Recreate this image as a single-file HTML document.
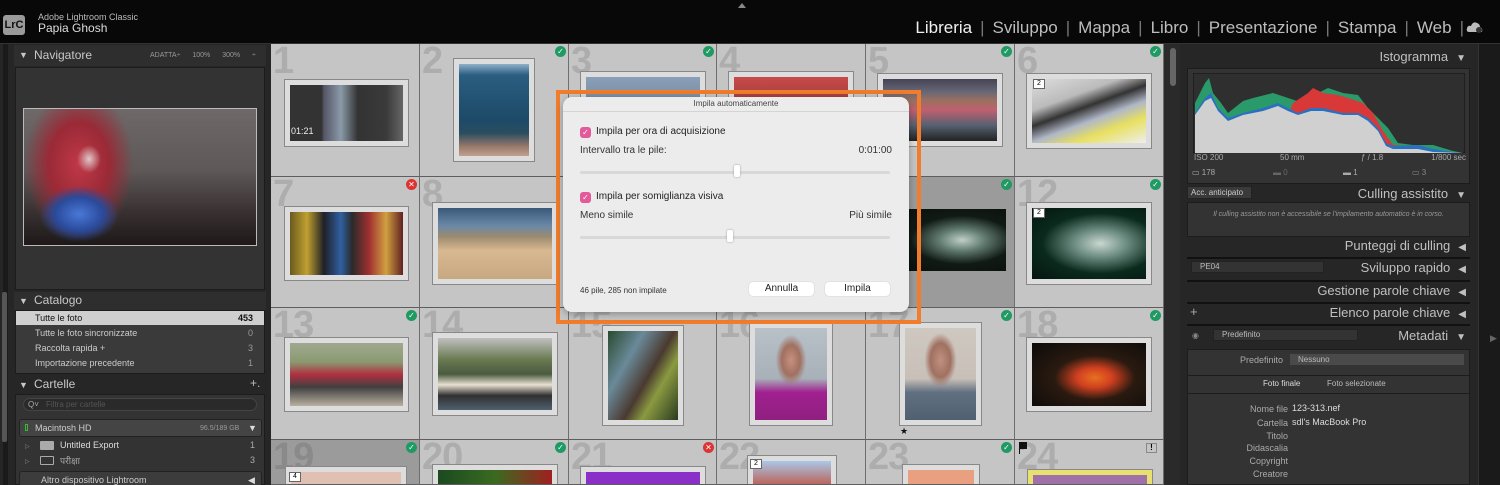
<!DOCTYPE html>
<html><head><meta charset="utf-8"><style>
*{margin:0;padding:0;box-sizing:border-box}
html,body{width:1500px;height:485px;overflow:hidden}
body{background:#1e1e1e;font-family:"Liberation Sans","DejaVu Sans",sans-serif;position:relative}
.a{position:absolute}
.top{left:0;top:0;width:1500px;height:44px;background:#080808;border-bottom:1px solid #333}
.nav{right:28px;top:18px;font-size:17px;color:#bdbdbd;white-space:nowrap}
.nav span.s{color:#777;margin:0 8px}
.lp{left:0;top:44px;width:271px;height:441px;background:#262626;overflow:hidden}
.hdr{color:#c8c8c8;font-size:12px}
.cell{position:absolute;background:#c5c5c5;border-right:1px solid #6e6e6e;border-bottom:1px solid #5e5e5e;overflow:hidden}
.num{position:absolute;left:2px;top:-4px;font-size:38px;font-weight:bold;color:#adadad;letter-spacing:-1px}
.dk{background:#9b9b9b}.dk .num{color:#8a8a8a}
.th{position:absolute;border:1px solid #888;background:#ddd;padding:0}
.th i{position:absolute;left:5px;top:5px;right:5px;bottom:5px;display:block}
.ck{position:absolute;width:11px;height:11px;border-radius:50%;background:#1f9a63;color:#fff;font-size:8px;line-height:11px;text-align:center;font-weight:bold}
.x{background:#d33}
.rp{left:1180px;top:44px;width:298px;height:441px;background:#262626;overflow:hidden}
.rh{position:absolute;right:12px;font-size:13px;color:#c0c0c0;white-space:nowrap}
.rh b{font-weight:normal;font-size:10px;margin-left:8px}
.sep{position:absolute;left:7px;width:283px;height:2px;background:#111}
.ml{position:absolute;font-size:9px;color:#aaa;text-align:right;width:90px;left:18px}
.mf{position:absolute;left:110px;width:163px;height:11px;background:#333;font-size:9px;color:#ddd;padding-left:2px;line-height:11px}
</style></head><body>
<div class="a top">
  <div class="a" style="left:3px;top:15px;width:22px;height:20px;background:#9a9a9a;border-radius:3px;color:#111;font-weight:bold;font-size:11px;text-align:center;line-height:20px">LrC</div>
  <div class="a" style="left:38px;top:12px;font-size:9px;color:#bbb">Adobe Lightroom Classic</div>
  <div class="a" style="left:38px;top:21px;font-size:12px;color:#ddd">Papia Ghosh</div>
  <div class="a" style="left:738px;top:3px;width:0;height:0;border-left:4px solid transparent;border-right:4px solid transparent;border-bottom:5px solid #888"></div>
  <div class="a nav"><span style="color:#f0f0f0">Libreria</span><span class="s">|</span>Sviluppo<span class="s">|</span>Mappa<span class="s">|</span>Libro<span class="s">|</span>Presentazione<span class="s">|</span>Stampa<span class="s">|</span>Web<span class="s">|</span></div>
  <svg class="a" style="left:1466px;top:21px" width="18" height="12"><path d="M3 11 Q0 11 1 7 Q2 4 5 5 Q7 0 11 2 Q14 3 14 6 Q17 7 16 11Z" fill="#bbb"/><circle cx="13" cy="9" r="3" fill="#333"/></svg>
</div>

<!-- left panel -->
<div class="a lp">
  <div class="a" style="left:3px;top:0;width:5px;height:441px;background:#1a1a1a"></div>
  <div class="a" style="left:2px;top:248px;width:5px;height:150px;background:#555;border-radius:2px"></div>
  <div class="a" style="left:14px;top:1px;width:252px;height:21px;background:#2e2e2e"></div>
  <div class="a hdr" style="left:19px;top:6px;font-size:9px">▼</div>
  <div class="a hdr" style="left:34px;top:4px;font-size:12px">Navigatore</div>
  <div class="a" style="left:150px;top:8px;font-size:7px;color:#999;word-spacing:10px">ADATTA÷ 100% 300% ÷</div>
  <div class="a" style="left:15px;top:23px;width:250px;height:223px;background:#333;border:1px solid #1c1c1c"></div>
  <div class="a" style="left:23px;top:64px;width:234px;height:138px;border:1px solid #bbb;background:radial-gradient(40px 28px at 55px 105px,#4a78d8 0,#2a4a9a 60%,rgba(40,60,140,0) 100%),radial-gradient(12px 14px at 65px 50px,#e0c8c8 0,rgba(200,160,160,0) 100%),radial-gradient(55px 75px at 55px 55px,#c03848 0,#9a2a36 55%,rgba(120,40,50,0) 100%),linear-gradient(180deg,#6e6868 0,#5e5858 45%,#3a3232 75%,#1e1818 100%)"></div>
  <div class="a" style="left:14px;top:248px;width:252px;height:18px;background:#2e2e2e"></div>
  <div class="a hdr" style="left:19px;top:252px;font-size:9px">▼</div>
  <div class="a hdr" style="left:34px;top:249px">Catalogo</div>
  <div class="a" style="left:15px;top:266px;width:250px;height:64px;background:#3a3a3a;border:1px solid #1c1c1c"></div>
  <div class="a" style="left:16px;top:267px;width:248px;height:14px;background:#cfcfcf"></div>
  <div class="a" style="left:35px;top:269px;font-size:9px;color:#111">Tutte le foto</div><div class="a" style="left:238px;top:269px;font-size:9px;color:#111;font-weight:bold">453</div>
  <div class="a" style="left:35px;top:284px;font-size:9px;color:#ccc">Tutte le foto sincronizzate</div><div class="a" style="left:248px;top:284px;font-size:9px;color:#999">0</div>
  <div class="a" style="left:35px;top:299px;font-size:9px;color:#ccc">Raccolta rapida +</div><div class="a" style="left:248px;top:299px;font-size:9px;color:#999">3</div>
  <div class="a" style="left:35px;top:314px;font-size:9px;color:#ccc">Importazione precedente</div><div class="a" style="left:248px;top:314px;font-size:9px;color:#999">1</div>
  <div class="a hdr" style="left:19px;top:336px;font-size:9px">▼</div>
  <div class="a hdr" style="left:34px;top:333px">Cartelle</div>
  <div class="a" style="left:250px;top:332px;color:#bbb;font-size:12px">+.</div>
  <div class="a" style="left:15px;top:350px;width:250px;height:91px;background:#333;border:1px solid #1c1c1c"></div>
  <div class="a" style="left:23px;top:354px;width:234px;height:13px;background:#2a2a2a;border:1px solid #444;border-radius:7px;font-size:8px;color:#555;padding-left:22px;line-height:11px">Filtra per cartelle</div>
  <div class="a" style="left:28px;top:356px;font-size:8px;color:#aaa">Q˅</div>
  <div class="a" style="left:19px;top:375px;width:243px;height:18px;background:#444;border:1px solid #222;border-radius:3px"></div>
  <div class="a" style="left:25px;top:380px;width:3px;height:7px;border:1px solid #3b3;"></div>
  <div class="a" style="left:35px;top:379px;font-size:9px;color:#ccc">Macintosh HD</div>
  <div class="a" style="left:200px;top:381px;font-size:7px;color:#999">96.5/189 GB</div>
  <div class="a" style="left:248px;top:379px;font-size:9px;color:#ddd">▼</div>
  <div class="a" style="left:25px;top:399px;font-size:6px;color:#888">▷</div>
  <div class="a" style="left:40px;top:397px;width:14px;height:9px;background:#aaa;border-radius:1px"></div>
  <div class="a" style="left:60px;top:396px;font-size:9px;color:#ddd">Untitled Export</div><div class="a" style="left:250px;top:396px;font-size:9px;color:#aaa">1</div>
  <div class="a" style="left:25px;top:414px;font-size:6px;color:#888">▷</div>
  <div class="a" style="left:40px;top:412px;width:14px;height:9px;border:1px solid #aaa;border-radius:1px"></div>
  <div class="a" style="left:60px;top:410px;font-size:9px;color:#aaa">परीक्षा</div><div class="a" style="left:250px;top:411px;font-size:9px;color:#aaa">3</div>
  <div class="a" style="left:19px;top:427px;width:243px;height:16px;background:#3c3c3c;border:1px solid #222;border-radius:3px"></div>
  <div class="a" style="left:41px;top:431px;font-size:9px;color:#ccc">Altro dispositivo Lightroom</div>
  <div class="a" style="left:248px;top:431px;font-size:9px;color:#ddd">◀</div>
</div>

<!-- grid -->
<div class="a" style="left:271px;top:44px;width:893px;height:441px;background:#5e5e5e"></div>
<div class="cell" style="left:271px;top:44px;width:149px;height:133px"><div class="num">1</div>
 <div class="th" style="left:13px;top:35px;width:125px;height:68px"><i style="background:linear-gradient(90deg,#333 0,#333 28%,#556 30%,#8a9aa8 45%,#333 60%,#3a3a3a 85%,#666 100%)"></i></div>
 <div class="a" style="left:20px;top:82px;font-size:9px;color:#eee">01:21</div></div>
<div class="cell" style="left:420px;top:44px;width:149px;height:133px"><div class="num">2</div><div class="ck" style="left:135px;top:2px">✓</div>
 <div class="th" style="left:33px;top:14px;width:82px;height:104px"><i style="background:linear-gradient(180deg,#8fb0c8 0,#2a5e80 12%,#1d4a68 60%,#2a4d60 75%,#9a7a6a 90%,#c0a090 100%)"></i></div></div>
<div class="cell" style="left:569px;top:44px;width:148px;height:133px"><div class="num">3</div><div class="ck" style="left:134px;top:2px">✓</div>
 <div class="th" style="left:11px;top:27px;width:126px;height:80px"><i style="background:linear-gradient(180deg,#8aa0b8,#5a6878)"></i></div></div>
<div class="cell" style="left:717px;top:44px;width:149px;height:133px"><div class="num">4</div>
 <div class="th" style="left:11px;top:27px;width:126px;height:80px"><i style="background:linear-gradient(180deg,#c84a4a,#5a2a2a)"></i></div></div>
<div class="cell" style="left:866px;top:44px;width:149px;height:133px"><div class="num">5</div><div class="ck" style="left:135px;top:2px">✓</div>
 <div class="th" style="left:11px;top:29px;width:126px;height:74px"><i style="background:linear-gradient(180deg,#445 0,#667 20%,#9a7060 35%,#c06070 50%,#556070 75%,#222 100%)"></i></div></div>
<div class="cell" style="left:1015px;top:44px;width:149px;height:133px"><div class="num">6</div><div class="ck" style="left:135px;top:2px">✓</div>
 <div class="th" style="left:11px;top:29px;width:126px;height:76px"><i style="background:linear-gradient(160deg,#ddd 0,#bbb 30%,#333 45%,#b0b8c8 60%,#e8e060 75%,#eee 100%)"></i></div>
 <div class="a" style="left:18px;top:35px;width:12px;height:10px;background:#fff;border:1px solid #666;font-size:7px;text-align:center;line-height:8px">2</div></div>

<div class="cell" style="left:271px;top:177px;width:149px;height:131px"><div class="num">7</div><div class="ck x" style="left:135px;top:2px">✕</div>
 <div class="th" style="left:13px;top:29px;width:125px;height:75px"><i style="background:linear-gradient(90deg,#6a5a20 0,#c0a030 15%,#202028 30%,#3060a0 45%,#2a2a2a 55%,#a03030 70%,#d0a040 85%,#602020 100%)"></i></div></div>
<div class="cell" style="left:420px;top:177px;width:149px;height:131px"><div class="num">8</div>
 <div class="th" style="left:12px;top:25px;width:126px;height:83px"><i style="background:linear-gradient(180deg,#3a5878 0,#6a88a8 25%,#9a8a70 40%,#d8b890 60%,#c8a880 100%)"></i></div></div>
<div class="cell" style="left:569px;top:177px;width:148px;height:131px"><div class="num">9</div></div>
<div class="cell" style="left:717px;top:177px;width:149px;height:131px"><div class="num">10</div></div>
<div class="cell dk" style="left:866px;top:177px;width:149px;height:131px"><div class="num">11</div><div class="ck" style="left:135px;top:2px">✓</div>
 <div class="a" style="left:30px;top:32px;width:110px;height:62px;background:radial-gradient(ellipse at 60% 50%,#c0d0c8 0,#607a70 25%,#101a14 55%,#0a0f0c 100%)"></div></div>
<div class="cell" style="left:1015px;top:177px;width:149px;height:131px"><div class="num">12</div><div class="ck" style="left:135px;top:2px">✓</div>
 <div class="th" style="left:11px;top:25px;width:126px;height:83px"><i style="background:radial-gradient(ellipse at 60% 50%,#c8d8d0 0,#6a8a80 28%,#0a2a1c 60%,#051510 100%)"></i></div>
 <div class="a" style="left:18px;top:31px;width:12px;height:10px;background:#fff;border:1px solid #666;font-size:7px;text-align:center;line-height:8px">2</div></div>

<div class="cell" style="left:271px;top:308px;width:149px;height:132px"><div class="num">13</div><div class="ck" style="left:135px;top:2px">✓</div>
 <div class="th" style="left:13px;top:29px;width:125px;height:75px"><i style="background:linear-gradient(180deg,#a0a890 0,#8a9a70 30%,#b03040 50%,#404040 70%,#b8b0a0 100%)"></i></div></div>
<div class="cell" style="left:420px;top:308px;width:149px;height:132px"><div class="num">14</div>
 <div class="th" style="left:12px;top:24px;width:126px;height:84px"><i style="background:linear-gradient(180deg,#c0c0c0 0,#6a7a50 30%,#4a5a40 50%,#e8e0d0 65%,#303030 80%,#506070 100%)"></i></div></div>
<div class="cell" style="left:569px;top:308px;width:148px;height:132px"><div class="num">15</div>
 <div class="th" style="left:33px;top:17px;width:82px;height:101px"><i style="background:linear-gradient(120deg,#2a4a30 0,#6a8a9a 30%,#4a3a30 55%,#8a9a40 70%,#2a3a20 100%)"></i></div></div>
<div class="cell" style="left:717px;top:308px;width:149px;height:132px"><div class="num">16</div>
 <div class="th" style="left:32px;top:14px;width:84px;height:104px"><i style="background:radial-gradient(ellipse at 50% 35%,#c89080 0,#a07060 18%,transparent 30%),linear-gradient(180deg,#b8c0c8 0,#a8b0b8 55%,#a02090 70%,#902080 100%)"></i></div></div>
<div class="cell" style="left:866px;top:308px;width:149px;height:132px"><div class="num">17</div><div class="ck" style="left:135px;top:2px">✓</div>
 <div class="th" style="left:33px;top:14px;width:83px;height:104px"><i style="background:radial-gradient(ellipse at 50% 35%,#c09080 0,#a07060 20%,transparent 32%),linear-gradient(180deg,#cfc8c0 0,#c8c0b8 55%,#607080 70%,#506070 100%)"></i></div>
 <div class="a" style="left:34px;top:118px;font-size:9px;color:#111">★</div></div>
<div class="cell" style="left:1015px;top:308px;width:149px;height:132px"><div class="num">18</div><div class="ck" style="left:135px;top:2px">✓</div>
 <div class="th" style="left:11px;top:29px;width:126px;height:75px"><i style="background:radial-gradient(ellipse at 55% 55%,#e87020 0,#d04020 20%,#2a1a10 45%,#0a0a0a 100%)"></i></div></div>

<div class="cell dk" style="left:271px;top:440px;width:149px;height:45px"><div class="num">19</div><div class="ck" style="left:135px;top:2px">✓</div>
 <div class="th" style="left:14px;top:26px;width:122px;height:30px"><i style="background:#e0c0b0"></i></div>
 <div class="a" style="left:18px;top:32px;width:12px;height:10px;background:#fff;border:1px solid #666;font-size:7px;text-align:center;line-height:8px">4</div></div>
<div class="cell" style="left:420px;top:440px;width:149px;height:45px"><div class="num">20</div><div class="ck" style="left:135px;top:2px">✓</div>
 <div class="th" style="left:12px;top:24px;width:126px;height:30px"><i style="background:linear-gradient(90deg,#1a4a20,#3a6a20,#a02020)"></i></div></div>
<div class="cell" style="left:569px;top:440px;width:148px;height:45px"><div class="num">21</div><div class="ck x" style="left:134px;top:2px">✕</div>
 <div class="th" style="left:11px;top:26px;width:126px;height:30px"><i style="background:#8a30c8"></i></div></div>
<div class="cell" style="left:717px;top:440px;width:149px;height:45px"><div class="num">22</div>
 <div class="th" style="left:30px;top:15px;width:90px;height:40px"><i style="background:linear-gradient(180deg,#a8c8e8,#c05040)"></i></div>
 <div class="a" style="left:33px;top:19px;width:12px;height:10px;background:#fff;border:1px solid #666;font-size:7px;text-align:center;line-height:8px">2</div></div>
<div class="cell" style="left:866px;top:440px;width:149px;height:45px"><div class="num">23</div><div class="ck" style="left:135px;top:2px">✓</div>
 <div class="th" style="left:36px;top:24px;width:78px;height:30px"><i style="background:#e8a080"></i></div></div>
<div class="cell" style="left:1015px;top:440px;width:149px;height:45px"><div class="num">24</div>
 <div class="a" style="left:4px;top:2px;width:8px;height:7px;background:#111"></div><div class="a" style="left:4px;top:2px;width:1px;height:12px;background:#111"></div>
 <div class="a" style="left:131px;top:3px;width:11px;height:10px;border:1px solid #888;font-size:8px;text-align:center;line-height:8px;font-weight:bold">!</div>
 <div class="th" style="left:12px;top:29px;width:126px;height:30px;background:#e8e070"><i style="background:#a070a8"></i></div></div>

<!-- dialog -->
<div class="a" style="left:556px;top:90px;width:365px;height:234px;border:4px solid #f07c2c"></div>
<div class="a" style="left:563px;top:97px;width:346px;height:215px;background:#ececec;border-radius:9px;box-shadow:0 2px 8px rgba(0,0,0,.3)">
  <div class="a" style="left:0;top:0;width:346px;height:15px;border-bottom:1px solid #d4d4d4;font-size:8px;color:#444;text-align:center;line-height:14px">Impila automaticamente</div>
  <div class="a" style="left:17px;top:30px;width:11px;height:11px;background:#e25a9a;border-radius:3px;color:#fff;font-size:8px;text-align:center;line-height:11px">✓</div>
  <div class="a" style="left:33px;top:29px;font-size:10px;color:#222">Impila per ora di acquisizione</div>
  <div class="a" style="left:17px;top:48px;font-size:10px;color:#333">Intervallo tra le pile:</div>
  <div class="a" style="right:17px;top:48px;font-size:10px;color:#333">0:01:00</div>
  <div class="a" style="left:17px;top:74px;width:310px;height:3px;background:#d8d8d8;border-radius:2px"></div>
  <div class="a" style="left:171px;top:68px;width:6px;height:12px;background:#fff;border-radius:2px;box-shadow:0 0 2px #999"></div>
  <div class="a" style="left:17px;top:95px;width:11px;height:11px;background:#e25a9a;border-radius:3px;color:#fff;font-size:8px;text-align:center;line-height:11px">✓</div>
  <div class="a" style="left:33px;top:94px;font-size:10px;color:#222">Impila per somiglianza visiva</div>
  <div class="a" style="left:17px;top:113px;font-size:10px;color:#333">Meno simile</div>
  <div class="a" style="right:17px;top:113px;font-size:10px;color:#333">Più simile</div>
  <div class="a" style="left:17px;top:139px;width:310px;height:3px;background:#d8d8d8;border-radius:2px"></div>
  <div class="a" style="left:164px;top:133px;width:6px;height:12px;background:#fff;border-radius:2px;box-shadow:0 0 2px #999"></div>
  <div class="a" style="left:17px;top:189px;font-size:8px;color:#333">46 pile, 285 non impilate</div>
  <div class="a" style="left:186px;top:185px;width:65px;height:14px;background:#fff;border-radius:4px;box-shadow:0 0 1px #aaa;font-size:10px;text-align:center;line-height:14px;color:#222">Annulla</div>
  <div class="a" style="left:262px;top:185px;width:65px;height:14px;background:#fff;border-radius:4px;box-shadow:0 0 1px #aaa;font-size:10px;text-align:center;line-height:14px;color:#222">Impila</div>
</div>

<!-- scrollbar -->
<div class="a" style="left:1164px;top:44px;width:16px;height:441px;background:#2a2a2a"></div>
<div class="a" style="left:1170px;top:48px;width:6px;height:38px;background:#666;border-radius:3px"></div>

<!-- right panel -->
<div class="a rp">
  <div class="rh" style="top:5px">Istogramma<b>▼</b></div>
  <div class="a" style="left:7px;top:24px;width:283px;height:116px;background:#333;border:1px solid #1c1c1c"></div>
  <svg class="a" style="left:13px;top:29px" width="272" height="80" viewBox="0 0 272 80"><rect width="272" height="80" fill="#2f2f2f" stroke="#111"/>
   <path d="M2 80 L2 30 L12 10 L16 5 L20 20 L28 30 L35 40 L50 28 L60 25 L80 20 L95 25 L110 30 L125 20 L135 15 L150 20 L165 22 L175 35 L185 45 L195 55 L205 70 L220 72 L240 72 L260 78 L270 80Z" fill="#2a9a6a"/>
   <path d="M80 80 L100 30 L115 20 L120 15 L130 20 L145 22 L155 25 L170 30 L180 40 L190 58 L200 72 L230 75 L240 77 L250 80Z" fill="#d83838"/>
   <path d="M2 80 L2 40 L12 25 L18 20 L25 35 L35 45 L50 40 L70 35 L85 30 L95 35 L105 40 L118 35 L130 35 L150 40 L165 40 L175 45 L185 55 L193 70 L200 73 L225 72 L240 76 L260 79 L270 80Z" fill="#2a70c0"/>
   <path d="M2 80 L2 42 L12 28 L18 25 L25 38 L35 48 L50 42 L70 38 L85 33 L95 38 L105 42 L118 38 L130 38 L150 42 L165 42 L175 48 L185 58 L193 73 L200 76 L225 76 L240 79 L270 80Z" fill="#d0d0d0"/>
  </svg>
  <div class="a" style="left:14px;top:109px;width:272px;font-size:8px;color:#aaa"><span>ISO 200</span><span style="position:absolute;left:86px">50 mm</span><span style="position:absolute;left:167px">ƒ / 1.8</span><span style="position:absolute;right:0">1/800 sec</span></div>
  <div class="a" style="left:12px;top:124px;font-size:8px;color:#aaa">▭ 178</div>
  <div class="a" style="left:93px;top:124px;font-size:8px;color:#666">▬ 0</div>
  <div class="a" style="left:163px;top:124px;font-size:8px;color:#aaa">▬ 1</div>
  <div class="a" style="left:232px;top:124px;font-size:8px;color:#888">▭ 3</div>
  <div class="a" style="left:7px;top:142px;width:65px;height:13px;background:#3a3a3a;border:1px solid #222;font-size:8px;color:#ccc;line-height:11px;padding-left:3px">Acc. anticipato</div>
  <div class="rh" style="top:142px">Culling assistito<b>▼</b></div>
  <div class="a" style="left:7px;top:158px;width:283px;height:35px;background:#333;border:1px solid #1c1c1c;font-size:7px;color:#999;font-style:italic;text-align:center;padding:7px 20px 0;line-height:10px">Il culling assistito non è accessibile se l'impilamento automatico è in corso.</div>
  <div class="rh" style="top:194px">Punteggi di culling<b>◀</b></div>
  <div class="sep" style="top:213px"></div>
  <div class="a" style="left:11px;top:217px;width:133px;height:12px;background:#333;border:1px solid #222;font-size:8px;color:#bbb;padding-left:8px;line-height:10px">PE04</div>
  <div class="rh" style="top:216px">Sviluppo rapido<b>◀</b></div>
  <div class="sep" style="top:236px"></div>
  <div class="rh" style="top:239px">Gestione parole chiave<b>◀</b></div>
  <div class="sep" style="top:258px"></div>
  <div class="a" style="left:10px;top:260px;font-size:13px;color:#aaa">+</div>
  <div class="rh" style="top:261px">Elenco parole chiave<b>◀</b></div>
  <div class="sep" style="top:280px"></div>
  <div class="a" style="left:12px;top:287px;font-size:8px;color:#888">◉</div>
  <div class="a" style="left:33px;top:285px;width:145px;height:12px;background:#333;border:1px solid #222;font-size:8px;color:#bbb;padding-left:8px;line-height:10px">Predefinito</div>
  <div class="rh" style="top:284px">Metadati<b>▼</b></div>
  <div class="a" style="left:7px;top:305px;width:283px;height:136px;background:#333;border:1px solid #1c1c1c"></div>
  <div class="a" style="left:60px;top:311px;font-size:9px;color:#aaa">Predefinito</div>
  <div class="a" style="left:110px;top:310px;width:174px;height:11px;background:#4a4a4a;font-size:8px;color:#bbb;padding-left:8px;line-height:11px">Nessuno</div>
  <div class="a" style="left:7px;top:331px;width:283px;height:1px;background:#1c1c1c"></div>
  <div class="a" style="left:83px;top:335px;font-size:8px;color:#ddd">Foto finale</div>
  <div class="a" style="left:147px;top:335px;font-size:8px;color:#bbb">Foto selezionate</div>
  <div class="a" style="left:7px;top:349px;width:283px;height:1px;background:#1c1c1c"></div>
  <div class="ml" style="top:360px">Nome file</div><div class="mf" style="top:359px">123-313.nef</div>
  <div class="ml" style="top:374px">Cartella</div><div class="mf" style="top:373px">sdl's MacBook Pro</div>
  <div class="ml" style="top:387px">Titolo</div><div class="mf" style="top:386px"></div>
  <div class="ml" style="top:399px">Didascalia</div><div class="mf" style="top:398px"></div>
  <div class="ml" style="top:412px">Copyright</div><div class="mf" style="top:411px"></div>
  <div class="ml" style="top:425px">Creatore</div><div class="mf" style="top:424px"></div>
</div>
<div class="a" style="left:1478px;top:44px;width:22px;height:441px;background:#1a1a1a;border-left:1px solid #333"></div>
<div class="a" style="left:1490px;top:333px;font-size:9px;color:#666">▶</div>
</body></html>
